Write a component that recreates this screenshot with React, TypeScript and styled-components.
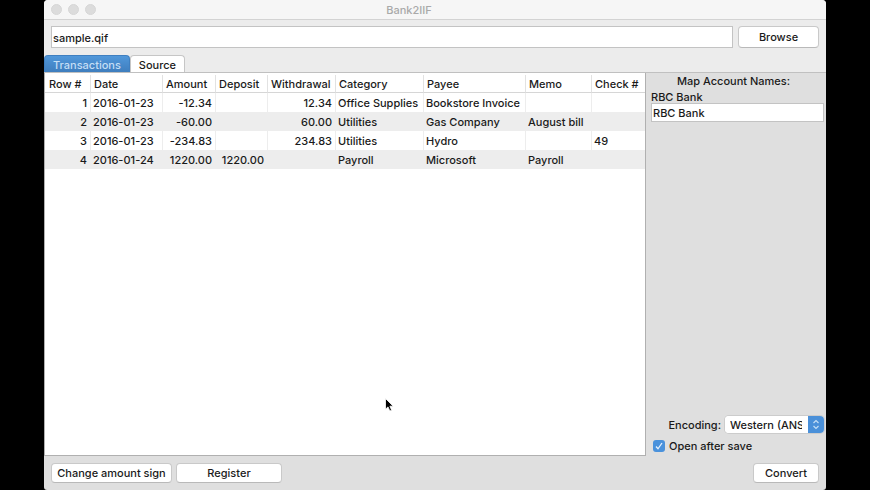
import React from 'react';
import styled, { createGlobalStyle } from 'styled-components';

const GlobalStyle = createGlobalStyle`
  *, *::before, *::after { box-sizing: border-box; }
  body {
    margin: 0;
    background: #000;
    color: #1a1a1a;
    font: 500 11px/16px Inter, "Liberation Sans", sans-serif;
  }
  button, input, select { font: inherit; color: inherit; margin: 0; }
`;

const Desktop = styled.div`
  position: relative;
  display: flex;
  height: 100vh;
  padding: 0 44px;
  background: #000;
`;

const AppWindow = styled.main`
  flex: 1;
  min-width: 0;
  display: flex;
  flex-direction: column;
  background: #dfdfdf;
  border-radius: 4px 4px 3px 3px;
  overflow: hidden;
`;

const TitleBar = styled.header`
  display: grid;
  grid-template-columns: 1fr auto 1fr;
  align-items: center;
  height: 20px;
  padding: 0 59px 0 7px;
  background: #f6f6f6;
  border-bottom: 1px solid #d3d3d3;
`;

const Lights = styled.div`
  display: flex;
  gap: 6px;
`;

const Light = styled.span`
  width: 11px;
  height: 11px;
  border-radius: 50%;
  background: #dcdcdc;
  border: 1px solid #d6d6d6;
`;

const Title = styled.h1`
  margin: 0;
  font-size: 11px;
  font-weight: 500;
  color: #a9a9a9;
`;

const FileArea = styled.div`
  background: #ececec;
  padding-top: 6px;
`;

const FileRow = styled.div`
  display: flex;
  gap: 5px;
  padding: 0 7px;
`;

const TextField = styled.input<{ $tall?: boolean }>`
  flex: 1;
  width: 100%;
  min-width: 0;
  height: ${(p) => (p.$tall ? 22 : 19)}px;
  padding: 1px 1px 0;
  background: #fff;
  border: 1px solid #c3c3c3;
  border-radius: 0;
  outline: none;
`;

const PushButton = styled.button<{ $width: number; $tall?: boolean }>`
  width: ${(p) => p.$width}px;
  height: ${(p) => (p.$tall ? 22 : 20)}px;
  padding: 0;
  background: #fff;
  border: 1px solid #c9c9c9;
  border-bottom-color: #b9b9b9;
  border-radius: 4px;
  white-space: nowrap;
`;

const TabList = styled.div`
  display: flex;
  margin-top: 7px;
  border-bottom: 1px solid #c0c0c0;
`;

const Tab = styled.button<{ $active?: boolean }>`
  height: 17px;
  padding: 1px 8px 0;
  border: 1px solid ${(p) => (p.$active ? '#3f7fc0' : '#c6c6c6')};
  border-bottom: 0;
  border-radius: 4px 4px 0 0;
  background: ${(p) => (p.$active ? 'linear-gradient(#5097da, #3f7ebe)' : '#fff')};
  color: ${(p) => (p.$active ? '#c4def5' : '#1a1a1a')};
`;

const Body = styled.div`
  flex: 1;
  min-height: 0;
  display: flex;
`;

const TablePane = styled.section`
  flex: 1;
  min-width: 0;
  padding-top: 2px;
  background: #fff;
  border: 1px solid #b0b0b0;
  border-top: 0;
`;

const Table = styled.table`
  width: 100%;
  table-layout: fixed;
  border-collapse: separate;
  border-spacing: 0;
`;

const Column = styled.col<{ $width?: number }>`
  width: ${(p) => (p.$width ? `${p.$width}px` : 'auto')};
`;

const HeadCell = styled.th`
  height: 18px;
  padding: 0 3px;
  font-weight: 500;
  white-space: nowrap;
  text-align: left;
  border-right: 1px solid #e2e2e2;
  border-bottom: 1px solid #d6d6d6;
  &:first-child { padding-left: 4px; }
  &:last-child { border-right: 0; }
`;

const Row = styled.tr`
  &:nth-child(even) { background: #ededed; }
`;

const Cell = styled.td<{ $right?: boolean }>`
  height: 19px;
  padding: 0 3px 0 2px;
  white-space: nowrap;
  text-align: ${(p) => (p.$right ? 'right' : 'left')};
  border-right: 1px solid #ededed;
  &:last-child { border-right: 0; }
`;

const SidePanel = styled.aside`
  width: 180px;
  display: flex;
  flex-direction: column;
  padding: 0 2px 0 5px;
`;

const SideTitle = styled.h2`
  margin: 0;
  font-size: 11px;
  font-weight: 500;
  text-align: center;
  padding-right: 8px;
`;

const AccountField = styled.label`
  display: flex;
  flex-direction: column;
`;

const AccountName = styled.span`
  height: 14px;
`;

const FieldLine = styled.span`
  display: flex;
`;

const SaveOptions = styled.div`
  margin-top: auto;
  display: flex;
  flex-direction: column;
  gap: 5px;
  padding-bottom: 2px;
`;

const EncodingRow = styled.div`
  display: flex;
  align-items: center;
  justify-content: flex-end;
  gap: 4px;
`;

const SelectBox = styled.div`
  display: flex;
  width: 99px;
  height: 17px;
  border-radius: 4px;
  background: #fff;
  box-shadow: 0 0 0 1px #cccccc;
  overflow: hidden;
`;

const Select = styled.select`
  appearance: none;
  flex: 1;
  min-width: 0;
  padding: 0 6px 0 5px;
  border: 0;
  background: #fff;
  outline: none;
  text-overflow: clip;
`;

const Stepper = styled.svg`
  width: 16px;
  height: 17px;
  background: #4a90d9;
`;

const CheckRow = styled.label`
  display: flex;
  align-items: center;
  gap: 4px;
  padding-left: 2px;
`;

const CheckSlot = styled.span`
  display: grid;
  width: 12px;
  height: 12px;
  > * { grid-area: 1 / 1; }
`;

const Checkbox = styled.input`
  appearance: none;
  width: 12px;
  height: 12px;
  border-radius: 3px;
  background: #4a92dc;
`;

const CheckMark = styled.svg`
  width: 12px;
  height: 12px;
  pointer-events: none;
`;

const Footer = styled.footer`
  display: flex;
  gap: 4px;
  padding: 7px;
`;

const Spacer = styled.span`
  flex: 1;
`;

const Pointer = styled.svg`
  position: absolute;
  left: 384px;
  top: 397px;
  width: 10px;
  height: 16px;
  pointer-events: none;
`;

const columns: { title: string; width?: number; right?: boolean }[] = [
  { title: 'Row #', width: 46, right: true },
  { title: 'Date', width: 72 },
  { title: 'Amount', width: 53, right: true },
  { title: 'Deposit', width: 52, right: true },
  { title: 'Withdrawal', width: 68, right: true },
  { title: 'Category', width: 88 },
  { title: 'Payee', width: 102 },
  { title: 'Memo', width: 66 },
  { title: 'Check #' },
];

const rows = [
  ['1', '2016-01-23', '-12.34', '', '12.34', 'Office Supplies', 'Bookstore Invoice', '', ''],
  ['2', '2016-01-23', '-60.00', '', '60.00', 'Utilities', 'Gas Company', 'August bill', ''],
  ['3', '2016-01-23', '-234.83', '', '234.83', 'Utilities', 'Hydro', '', '49'],
  ['4', '2016-01-24', '1220.00', '1220.00', '', 'Payroll', 'Microsoft', 'Payroll', ''],
];

export default function App() {
  return (
    <>
      <GlobalStyle />
      <Desktop>
        <AppWindow>
          <TitleBar>
            <Lights>
              <Light />
              <Light />
              <Light />
            </Lights>
            <Title>Bank2IIF</Title>
          </TitleBar>
          <FileArea>
            <FileRow>
              <TextField $tall aria-label="File" defaultValue="sample.qif" />
              <PushButton type="button" $width={81} $tall>Browse</PushButton>
            </FileRow>
            <TabList role="tablist">
              <Tab type="button" role="tab" aria-selected="true" $active>Transactions</Tab>
              <Tab type="button" role="tab" aria-selected="false">Source</Tab>
            </TabList>
          </FileArea>
          <Body>
            <TablePane>
              <Table>
                <colgroup>
                  {columns.map((c) => (
                    <Column key={c.title} $width={c.width} />
                  ))}
                </colgroup>
                <thead>
                  <tr>
                    {columns.map((c) => (
                      <HeadCell key={c.title} scope="col">{c.title}</HeadCell>
                    ))}
                  </tr>
                </thead>
                <tbody>
                  {rows.map((row) => (
                    <Row key={row[0]}>
                      {row.map((text, i) => (
                        <Cell key={columns[i].title} $right={columns[i].right}>{text}</Cell>
                      ))}
                    </Row>
                  ))}
                </tbody>
              </Table>
            </TablePane>
            <SidePanel>
              <SideTitle>Map Account Names:</SideTitle>
              <AccountField>
                <AccountName>RBC Bank</AccountName>
                <FieldLine>
                  <TextField defaultValue="RBC Bank" />
                </FieldLine>
              </AccountField>
              <SaveOptions>
                <EncodingRow>
                  <label htmlFor="encoding">Encoding:</label>
                  <SelectBox>
                    <Select id="encoding" defaultValue="ansi">
                      <option value="ansi">Western (ANSI)</option>
                    </Select>
                    <Stepper viewBox="0 0 16 17" fill="none" stroke="#c4def5" strokeWidth="1.2">
                      <path d="M5.5 7 8 4.5 10.5 7M5.5 10 8 12.5 10.5 10" />
                    </Stepper>
                  </SelectBox>
                </EncodingRow>
                <CheckRow>
                  <CheckSlot>
                    <Checkbox type="checkbox" defaultChecked />
                    <CheckMark viewBox="0 0 12 12" fill="none" stroke="#e6f2fd" strokeWidth="1.3">
                      <path d="M3 6.5 5 8.8 9 3" />
                    </CheckMark>
                  </CheckSlot>
                  Open after save
                </CheckRow>
              </SaveOptions>
            </SidePanel>
          </Body>
          <Footer>
            <PushButton type="button" $width={121}>Change amount sign</PushButton>
            <PushButton type="button" $width={106}>Register</PushButton>
            <Spacer />
            <PushButton type="button" $width={66}>Convert</PushButton>
          </Footer>
        </AppWindow>
        <Pointer viewBox="0 0 10 16" aria-hidden="true">
          <path
            d="M1.5 1.5V12.2L4 9.9 5.8 14 7.6 13.2 5.9 9.2H9.2Z"
            fill="#000"
            stroke="#fff"
            strokeWidth="0.8"
          />
        </Pointer>
      </Desktop>
    </>
  );
}
